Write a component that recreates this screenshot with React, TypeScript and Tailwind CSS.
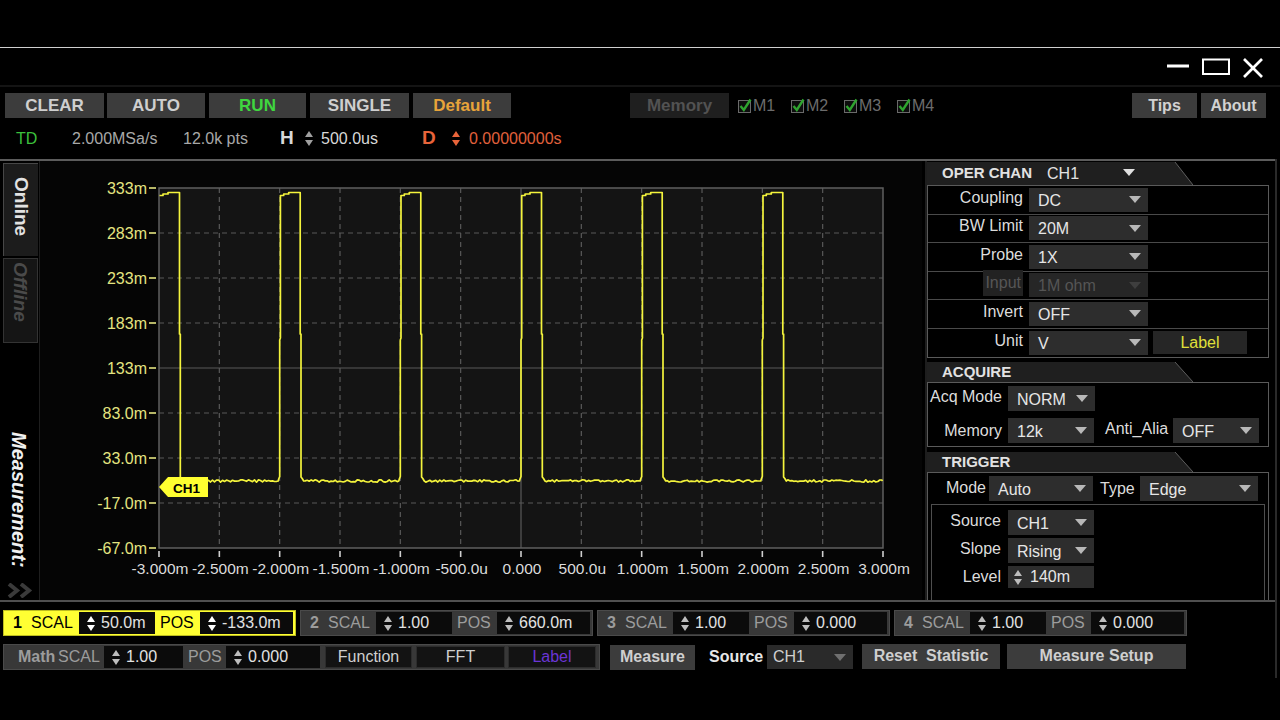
import React from 'react';

const FONT = "'Liberation Sans', Arial, sans-serif";

function UpDown({ color = '#d8d8d8' }: { color?: string }) {
  return (
    <svg width="8" height="15" viewBox="0 0 8 15">
      <polygon points="4,0 8,6 0,6" fill={color} />
      <polygon points="0,9 8,9 4,15" fill={color} />
    </svg>
  );
}

function Caret({ color = '#b8b8b8' }: { color?: string }) {
  return (
    <svg width="12" height="7" viewBox="0 0 12 7">
      <polygon points="0,0 12,0 6,7" fill={color} />
    </svg>
  );
}

function Drop({ cls, text, dim = false }: { cls: string; text: string; dim?: boolean }) {
  return (
    <div className={`${cls} flex items-center justify-between pl-[9px] pr-[7px] ${dim ? 'bg-[#262626]' : 'bg-[#2d2d2d]'}`}>
      <span className={`text-[16px] pt-[2px] ${dim ? 'text-[#555]' : 'text-[#e6e6e6]'}`}>{text}</span>
      <Caret color={dim ? '#3e3e3e' : '#b8b8b8'} />
    </div>
  );
}

function PanelHeader({ title, h, children }: { title: string; h: number; children?: React.ReactNode }) {
  return (
    <div className={`relative w-[266px] flex items-center ${h === 23 ? 'h-[23px]' : 'h-[20px]'}`}>
      <svg className="absolute left-0 top-0" width="266" height={h} viewBox={`0 0 266 ${h}`}>
        <polygon points={`0,0 248,0 266,${h} 0,${h}`} fill="#1f1f1f" />
        <line x1="248" y1="0" x2="266" y2={h} stroke="#5e5e5e" strokeWidth="1" />
      </svg>
      <span className="relative ml-[15px] text-[15px] font-bold text-[#e2e2e2]">{title}</span>
      {children}
    </div>
  );
}

function WindowControls() {
  return (
    <svg width="100" height="37" viewBox="0 0 100 37">
      <rect x="2" y="16.5" width="22" height="3" fill="#ffffff" />
      <rect x="38" y="11.5" width="26" height="14.5" fill="none" stroke="#ffffff" strokeWidth="2" />
      <line x1="79" y1="11" x2="97" y2="29" stroke="#ffffff" strokeWidth="2.6" />
      <line x1="97" y1="11" x2="79" y2="29" stroke="#ffffff" strokeWidth="2.6" />
    </svg>
  );
}

function Check({ label }: { label: string }) {
  return (
    <div className="w-[53px] flex items-center">
      <svg width="15" height="16" viewBox="0 0 15 16">
        <rect x="0.5" y="2.5" width="12" height="12" fill="#0d0d0d" stroke="#6a6a6a" />
        <path d="M2.5 8 L5.8 12 L12.5 1.5" stroke="#2fa32f" strokeWidth="2.4" fill="none" />
      </svg>
      <span className="text-[16px] text-[#6c6c6c]">{label}</span>
    </div>
  );
}

function Toolbar() {
  const b = 'h-[25px] flex items-center justify-center bg-[#3c3c3c]';
  return (
    <div className="h-[25px] flex pl-[5px] text-[17px] font-bold">
      <div className={`${b} w-[99px] text-[#cfcfcf]`}>CLEAR</div>
      <div className={`${b} w-[98px] ml-[3px] text-[#cfcfcf]`}>AUTO</div>
      <div className={`${b} w-[97px] ml-[4px] text-[#3fd63f]`}>RUN</div>
      <div className={`${b} w-[99px] ml-[4px] text-[#cfcfcf]`}>SINGLE</div>
      <div className={`${b} w-[98px] ml-[4px] text-[#e8a43a]`}>Default</div>
      <div className="h-[25px] w-[99px] ml-[119px] flex items-center justify-center bg-[#1f1f1f] text-[#525252]">Memory</div>
      <div className="ml-[9px] flex items-center font-normal">
        <Check label="M1" />
        <Check label="M2" />
        <Check label="M3" />
        <Check label="M4" />
      </div>
      <div className={`${b} w-[65px] ml-auto text-[16px] text-[#d2d2d2]`}>Tips</div>
      <div className={`${b} w-[65px] ml-[4px] mr-[14px] text-[16px] text-[#d2d2d2]`}>About</div>
    </div>
  );
}

function InfoRow() {
  return (
    <div className="h-[41px] flex items-center text-[16px]">
      <div className="w-[72px] pl-[16px] text-[#3cc03c]">TD</div>
      <div className="w-[111px] text-[#a8a8a8]">2.000MSa/s</div>
      <div className="w-[97px] text-[#a8a8a8]">12.0k pts</div>
      <div className="w-[25px] text-[19px] font-bold text-[#d8d8d8]">H</div>
      <div className="w-[16px] flex items-center"><UpDown color="#a0a0a0" /></div>
      <div className="w-[101px] text-[#d8d8d8]">500.0us</div>
      <div className="w-[30px] text-[19px] font-bold text-[#e8643a]">D</div>
      <div className="w-[17px] flex items-center"><UpDown color="#e8643a" /></div>
      <div className="text-[#e0603c]">0.00000000s</div>
    </div>
  );
}

function LeftTabs() {
  return (
    <div className="w-[40px] h-[439px] flex flex-col items-start border-r border-[#1e1e1e]">
      <div className="mt-[2px] ml-[3px] w-[35px] h-[93px] bg-[#1c1c1c] border-l border-t border-[#474747] flex justify-center pt-[13px]">
        <span className="[writing-mode:vertical-rl] text-[19px] font-bold text-[#e2e2e2] leading-none">Online</span>
      </div>
      <div className="mt-[2px] ml-[3px] w-[35px] h-[85px] bg-[#151515] border border-[#333333] flex justify-center pt-[3px]">
        <span className="[writing-mode:vertical-rl] text-[19px] font-bold italic text-[#4a4a4a] leading-none">Offline</span>
      </div>
      <div className="h-[89px]" />
      <div className="w-[38px] h-[142px] flex justify-center">
        <span className="[writing-mode:vertical-rl] text-[20px] font-bold italic text-[#f0f0f0] leading-none">Measurement:</span>
      </div>
      <div className="mt-[9px] ml-[6px]">
        <svg width="28" height="15" viewBox="0 0 28 15">
          <polyline points="3,1 11,7.5 3,14" fill="none" stroke="#3a3a3a" strokeWidth="4" />
          <polyline points="15,1 23,7.5 15,14" fill="none" stroke="#3a3a3a" strokeWidth="4" />
        </svg>
      </div>
    </div>
  );
}

const P = 724 / 6;
const rnd = (i: number) => {
  const s = Math.sin(i * 127.1 + 311.7) * 43758.5453;
  return s - Math.floor(s);
};

function buildWave() {
  const pts: string[] = [];
  const add = (x: number, y: number) => pts.push(`${x.toFixed(1)},${y.toFixed(1)}`);
  let n = 0;
  for (let k = 0; k < 6; k++) {
    const xr = 159 + k * P;
    const xf = xr + 20.5;
    if (k === 0) {
      add(159.5, 195.5);
    } else {
      add(xr - 1, 479);
      add(xr, 476.5);
      add(xr, 340);
      add(xr + 0.7, 338);
      add(xr + 0.7, 195.5);
    }
    add(xr + 4, 195.5);
    add(xr + 4, 194);
    add(xr + 9, 194);
    add(xr + 9, 192.5);
    add(xf, 192.5);
    add(xf, 334);
    add(xf + 0.8, 334);
    add(xf + 0.8, 477);
    add(xf + 2, 478.5);
    add(xf + 3.5, 481);
    const end = k < 5 ? 159 + (k + 1) * P - 1.5 : 882.5;
    for (let x = xf + 5; x < end; x += 2) {
      add(x, 481 + (rnd(n++) - 0.5) * 2.4);
    }
    add(end, 481);
  }
  return 'M' + pts.join(' L');
}

const WAVE = buildWave();
const XL = ['-3.000m', '-2.500m', '-2.000m', '-1.500m', '-1.000m', '-500.0u', '0.000', '500.0u', '1.000m', '1.500m', '2.000m', '2.500m', '3.000m'];
const YL = ['333m', '283m', '233m', '183m', '133m', '83.0m', '33.0m', '-17.0m', '-67.0m'];

function Scope() {
  const xs = XL.map((_, i) => 159 + (i * 724) / 12);
  const ys = YL.map((_, j) => 188 + j * 45);
  return (
    <svg width="882" height="439" viewBox="40 161 882 439" className="block bg-[#050505]">
      <rect x="159" y="188" width="724" height="360" fill="#141414" />
      {xs.slice(1, 12).map((x, i) => (
        <line key={'gx' + i} x1={x} y1={188} x2={x} y2={548} stroke="#595959" strokeWidth="1.2" strokeDasharray={i === 5 ? undefined : '5 4'} />
      ))}
      {ys.slice(1, 8).map((y, j) => (
        <line key={'gy' + j} x1={159} y1={y} x2={883} y2={y} stroke="#595959" strokeWidth="1.2" strokeDasharray={j === 3 ? undefined : '5 4'} />
      ))}
      <rect x="159" y="188" width="724" height="360" fill="none" stroke="#5f5f5f" strokeWidth="1.5" />
      {ys.map((y, j) => (
        <g key={'yl' + j}>
          <line x1="149" y1={y} x2="156" y2={y} stroke="#e4e480" strokeWidth="1.6" />
          <text x="147" y={y + 5.5} textAnchor="end" fontFamily={FONT} fontSize="16" fill="#e4e480">{YL[j]}</text>
        </g>
      ))}
      {xs.map((x, i) => (
        <g key={'xl' + i}>
          <line x1={x} y1="551" x2={x} y2="557" stroke="#cfcfcf" strokeWidth="1.6" />
          <text x={x + 1} y="574" textAnchor="middle" fontFamily={FONT} fontSize="15.5" fill="#dcdcdc">{XL[i]}</text>
        </g>
      ))}
      <path d={WAVE} fill="none" stroke="#f4f43c" strokeWidth="1.7" strokeLinejoin="round" />
      <polygon points="159,487 168,477 208,477 208,497 168,497" fill="#ffff30" />
      <text x="173" y="492.5" fontFamily={FONT} fontSize="13.5" fontWeight="bold" fill="#000">CH1</text>
    </svg>
  );
}

function ChanRow({ label, children, last = false, dim = false }: { label: string; children: React.ReactNode; last?: boolean; dim?: boolean }) {
  return (
    <div className={`h-[28.5px] flex items-center ${last ? '' : 'border-b border-[#4a4a4a]'}`}>
      <div className="w-[95px] flex justify-end mb-[4px]">
        <span className={`text-[16px] ${dim ? 'bg-[#222] text-[#565656] px-[2px] py-[1px]' : 'text-[#dcdcdc]'}`}>{label}</span>
      </div>
      {children}
    </div>
  );
}

function RightPanel() {
  return (
    <div className="w-[343px] h-[439px] flex flex-col pt-[1px]">
      <PanelHeader title="OPER CHAN" h={23}>
        <span className="relative ml-[15px] text-[16px] text-[#e2e2e2]">CH1</span>
        <span className="relative ml-[44px] mb-[3px]"><Caret color="#e0e0e0" /></span>
      </PanelHeader>
      <div className="w-[342px] border border-[#5a5a5a]">
        <ChanRow label="Coupling"><div className="ml-[6px]"><Drop cls="w-[119px] h-[24px]" text="DC" /></div></ChanRow>
        <ChanRow label="BW Limit"><div className="ml-[6px]"><Drop cls="w-[119px] h-[24px]" text="20M" /></div></ChanRow>
        <ChanRow label="Probe"><div className="ml-[6px]"><Drop cls="w-[119px] h-[24px]" text="1X" /></div></ChanRow>
        <ChanRow label="Input" dim><div className="ml-[6px]"><Drop cls="w-[119px] h-[24px]" text="1M ohm" dim /></div></ChanRow>
        <ChanRow label="Invert"><div className="ml-[6px]"><Drop cls="w-[119px] h-[24px]" text="OFF" /></div></ChanRow>
        <ChanRow label="Unit" last>
          <div className="ml-[6px]"><Drop cls="w-[119px] h-[24px]" text="V" /></div>
          <div className="ml-[5px] w-[94px] h-[23px] bg-[#262626] flex items-center justify-center text-[16px] text-[#e0e03a]">Label</div>
        </ChanRow>
      </div>
      <div className="mt-[4px]"><PanelHeader title="ACQUIRE" h={20} /></div>
      <div className="w-[342px] h-[65px] border border-[#5a5a5a] pt-[3px] flex flex-col gap-[7px]">
        <div className="h-[25px] flex items-center">
          <div className="w-[74px] text-right text-[16px] text-[#dcdcdc] mb-[4px] whitespace-nowrap">Acq Mode</div>
          <div className="ml-[6px]"><Drop cls="w-[87px] h-[25px]" text="NORM" /></div>
        </div>
        <div className="h-[25px] flex items-center">
          <div className="w-[74px] text-right text-[16px] text-[#dcdcdc]">Memory</div>
          <div className="ml-[6px]"><Drop cls="w-[86px] h-[25px]" text="12k" /></div>
          <div className="ml-[11px] w-[62px] text-[16px] text-[#dcdcdc] mb-[4px] whitespace-nowrap">Anti_Alia</div>
          <div className="ml-[6px]"><Drop cls="w-[86px] h-[25px]" text="OFF" /></div>
        </div>
      </div>
      <div className="mt-[5px]"><PanelHeader title="TRIGGER" h={20} /></div>
      <div className="w-[342px] flex-1 border-l border-r border-t border-[#5a5a5a] pt-[3px] flex flex-col">
        <div className="h-[25px] flex items-center">
          <div className="w-[58px] text-right text-[16px] text-[#dcdcdc] mb-[2px]">Mode</div>
          <div className="ml-[3px]"><Drop cls="w-[104px] h-[25px]" text="Auto" /></div>
          <div className="ml-[7px] w-[34px] text-[16px] text-[#dcdcdc]">Type</div>
          <div className="ml-[6px]"><Drop cls="w-[118px] h-[25px]" text="Edge" /></div>
        </div>
        <div className="mt-[3px] mx-[3px] flex-1 border-l border-r border-t border-[#4e4e4e] pt-[5px] flex flex-col gap-[3px]">
          <div className="h-[25px] flex items-center">
            <div className="w-[69px] text-right text-[16px] text-[#dcdcdc] mb-[4px]">Source</div>
            <div className="ml-[7px]"><Drop cls="w-[86px] h-[25px]" text="CH1" /></div>
          </div>
          <div className="h-[25px] flex items-center">
            <div className="w-[69px] text-right text-[16px] text-[#dcdcdc] mb-[4px]">Slope</div>
            <div className="ml-[7px]"><Drop cls="w-[86px] h-[25px]" text="Rising" /></div>
          </div>
          <div className="h-[22px] flex items-center">
            <div className="w-[69px] text-right text-[16px] text-[#dcdcdc]">Level</div>
            <div className="ml-[7px] w-[86px] h-[22px] bg-[#2d2d2d] flex items-center pl-[6px]">
              <UpDown color="#bdbdbd" />
              <span className="ml-[8px] text-[16px] text-[#e6e6e6]">140m</span>
            </div>
          </div>
        </div>
      </div>
    </div>
  );
}

function Spin({ cls, value, arrow = '#cfcfcf' }: { cls: string; value: string; arrow?: string }) {
  return (
    <div className={`${cls} h-[22px] bg-[#0b0b0b] flex items-center pl-[8px]`}>
      <UpDown color={arrow} />
      <span className="ml-[6px] text-[16px] text-[#e2e2e2]">{value}</span>
    </div>
  );
}

function ChanBox({ n, scal, pos, active = false }: { n: string; scal: string; pos: string; active?: boolean }) {
  const lab = active ? 'text-black' : 'text-[#9c9c9c]';
  return (
    <div className={`w-[293px] h-[26px] flex items-center border ${active ? 'bg-[#ffff33] border-[#bdbd20]' : 'bg-[#383838] border-[#4a4a4a]'}`}>
      <span className={`ml-[9px] w-[18px] text-[16px] font-bold ${lab}`}>{n}</span>
      <span className={`w-[48px] text-[16px] ${lab}`}>SCAL</span>
      <Spin cls="w-[76px]" value={scal} arrow={active ? '#ffffff' : '#bdbdbd'} />
      <span className={`w-[45px] pl-[5px] text-[16px] ${lab}`}>POS</span>
      <Spin cls="w-[93px]" value={pos} arrow={active ? '#ffffff' : '#bdbdbd'} />
    </div>
  );
}

function Bottom() {
  const gb = 'h-[25px] flex items-center justify-center bg-[#3c3c3c] text-[16px] font-bold text-[#cfcfcf]';
  return (
    <div className="pt-[8px] pb-[8px] pl-[3px]">
      <div className="h-[26px] flex gap-[4px]">
        <ChanBox n="1" scal="50.0m" pos="-133.0m" active />
        <ChanBox n="2" scal="1.00" pos="660.0m" />
        <ChanBox n="3" scal="1.00" pos="0.000" />
        <ChanBox n="4" scal="1.00" pos="0.000" />
      </div>
      <div className="mt-[8px] h-[26px] flex items-center">
        <div className="w-[597px] h-[26px] flex items-center bg-[#383838] border border-[#4a4a4a]">
          <span className="ml-[14px] w-[40px] text-[16px] font-bold text-[#9c9c9c]">Math</span>
          <span className="w-[46px] text-[16px] text-[#9c9c9c]">SCAL</span>
          <Spin cls="w-[79px]" value="1.00" arrow="#bdbdbd" />
          <span className="w-[43px] pl-[5px] text-[16px] text-[#9c9c9c]">POS</span>
          <Spin cls="w-[94px]" value="0.000" arrow="#bdbdbd" />
          <div className="ml-[5px] w-[87px] h-[22px] bg-[#131313] border border-[#2c2c2c] flex items-center justify-center text-[16px] text-[#cfcfcf]">Function</div>
          <div className="ml-[4px] w-[89px] h-[22px] bg-[#131313] border border-[#2c2c2c] flex items-center justify-center text-[16px] text-[#cfcfcf]">FFT</div>
          <div className="ml-[3px] w-[88px] h-[22px] bg-[#131313] border border-[#2c2c2c] flex items-center justify-center text-[16px] text-[#6b35d6]">Label</div>
        </div>
        <div className={`${gb} ml-[10px] w-[85px]`}>Measure</div>
        <span className="ml-[14px] w-[58px] text-[16px] font-bold text-[#e6e6e6]">Source</span>
        <div className="w-[86px] h-[24px] bg-[#2a2a2a] flex items-center justify-between pl-[6px] pr-[7px]">
          <span className="text-[16px] text-[#cfcfcf]">CH1</span>
          <Caret color="#707070" />
        </div>
        <div className={`${gb} ml-[9px] w-[138px] mb-[2px] whitespace-pre`}>{'Reset  Statistic'}</div>
        <div className={`${gb} ml-[7px] w-[179px] mb-[2px]`}>Measure Setup</div>
      </div>
    </div>
  );
}

export default function App() {
  return (
    <div className="w-[1280px] h-[720px] bg-black overflow-hidden font-['Liberation_Sans',Arial,sans-serif]">
      <div className="h-[47px]" />
      <div className="h-[1px] bg-[#d0d0d0]" />
      <div className="h-[37px] flex items-center justify-end pr-[15px]">
        <WindowControls />
      </div>
      <div className="h-[2px] bg-[#141414]" />
      <div className="h-[6px]" />
      <Toolbar />
      <InfoRow />
      <div className="w-[1277px] border-r-2 border-[#2a2a2a]">
        <div className="h-[2px] bg-[#5c5c5c]" />
        <div className="h-[439px] flex">
          <LeftTabs />
          <Scope />
          <div className="w-[5px] h-[439px] border-r-2 border-[#1d1d1d]" />
          <RightPanel />
        </div>
        <div className="h-[2px] bg-[#4f4f4f]" />
        <Bottom />
      </div>
    </div>
  );
}
